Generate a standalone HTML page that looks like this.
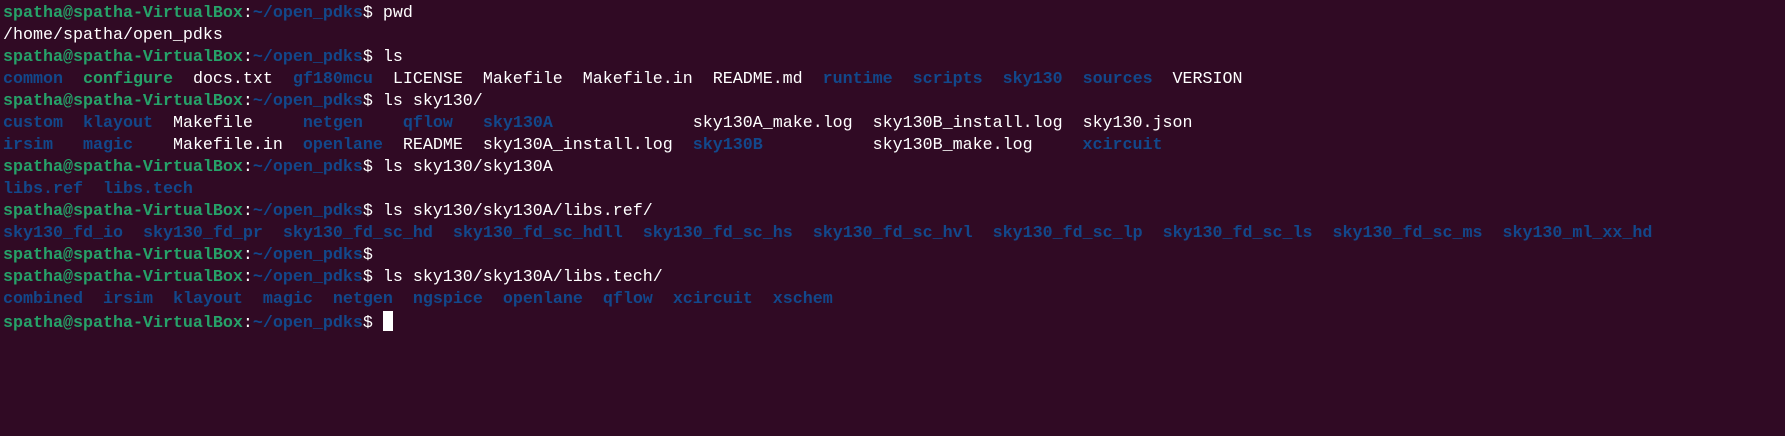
<!DOCTYPE html>
<html><head><meta charset="utf-8"><style>
html,body{margin:0;padding:0;background:#300a24;width:1785px;height:436px;overflow:hidden}
pre{margin:0;padding:3px 0 0 3px;font-family:"Liberation Mono",monospace;font-size:16.67px;line-height:22px;color:#ffffff}
.g{color:#26a269;font-weight:bold}
.b{color:#12488b;font-weight:bold}
.c{display:inline-block;width:10px;height:20px;background:#fff;vertical-align:-4px}
</style></head><body><pre><span class="g">spatha@spatha-VirtualBox</span>:<span class="b">~/open_pdks</span>$ pwd
/home/spatha/open_pdks
<span class="g">spatha@spatha-VirtualBox</span>:<span class="b">~/open_pdks</span>$ ls
<span class="b">common</span>  <span class="g">configure</span>  docs.txt  <span class="b">gf180mcu</span>  LICENSE  Makefile  Makefile.in  README.md  <span class="b">runtime</span>  <span class="b">scripts</span>  <span class="b">sky130</span>  <span class="b">sources</span>  VERSION
<span class="g">spatha@spatha-VirtualBox</span>:<span class="b">~/open_pdks</span>$ ls sky130/
<span class="b">custom</span>  <span class="b">klayout</span>  Makefile     <span class="b">netgen</span>    <span class="b">qflow</span>   <span class="b">sky130A</span>              sky130A_make.log  sky130B_install.log  sky130.json
<span class="b">irsim</span>   <span class="b">magic</span>    Makefile.in  <span class="b">openlane</span>  README  sky130A_install.log  <span class="b">sky130B</span>           sky130B_make.log     <span class="b">xcircuit</span>
<span class="g">spatha@spatha-VirtualBox</span>:<span class="b">~/open_pdks</span>$ ls sky130/sky130A
<span class="b">libs.ref</span>  <span class="b">libs.tech</span>
<span class="g">spatha@spatha-VirtualBox</span>:<span class="b">~/open_pdks</span>$ ls sky130/sky130A/libs.ref/
<span class="b">sky130_fd_io</span>  <span class="b">sky130_fd_pr</span>  <span class="b">sky130_fd_sc_hd</span>  <span class="b">sky130_fd_sc_hdll</span>  <span class="b">sky130_fd_sc_hs</span>  <span class="b">sky130_fd_sc_hvl</span>  <span class="b">sky130_fd_sc_lp</span>  <span class="b">sky130_fd_sc_ls</span>  <span class="b">sky130_fd_sc_ms</span>  <span class="b">sky130_ml_xx_hd</span>
<span class="g">spatha@spatha-VirtualBox</span>:<span class="b">~/open_pdks</span>$
<span class="g">spatha@spatha-VirtualBox</span>:<span class="b">~/open_pdks</span>$ ls sky130/sky130A/libs.tech/
<span class="b">combined</span>  <span class="b">irsim</span>  <span class="b">klayout</span>  <span class="b">magic</span>  <span class="b">netgen</span>  <span class="b">ngspice</span>  <span class="b">openlane</span>  <span class="b">qflow</span>  <span class="b">xcircuit</span>  <span class="b">xschem</span>
<span class="g">spatha@spatha-VirtualBox</span>:<span class="b">~/open_pdks</span>$ <span class="c"></span></pre></body></html>
